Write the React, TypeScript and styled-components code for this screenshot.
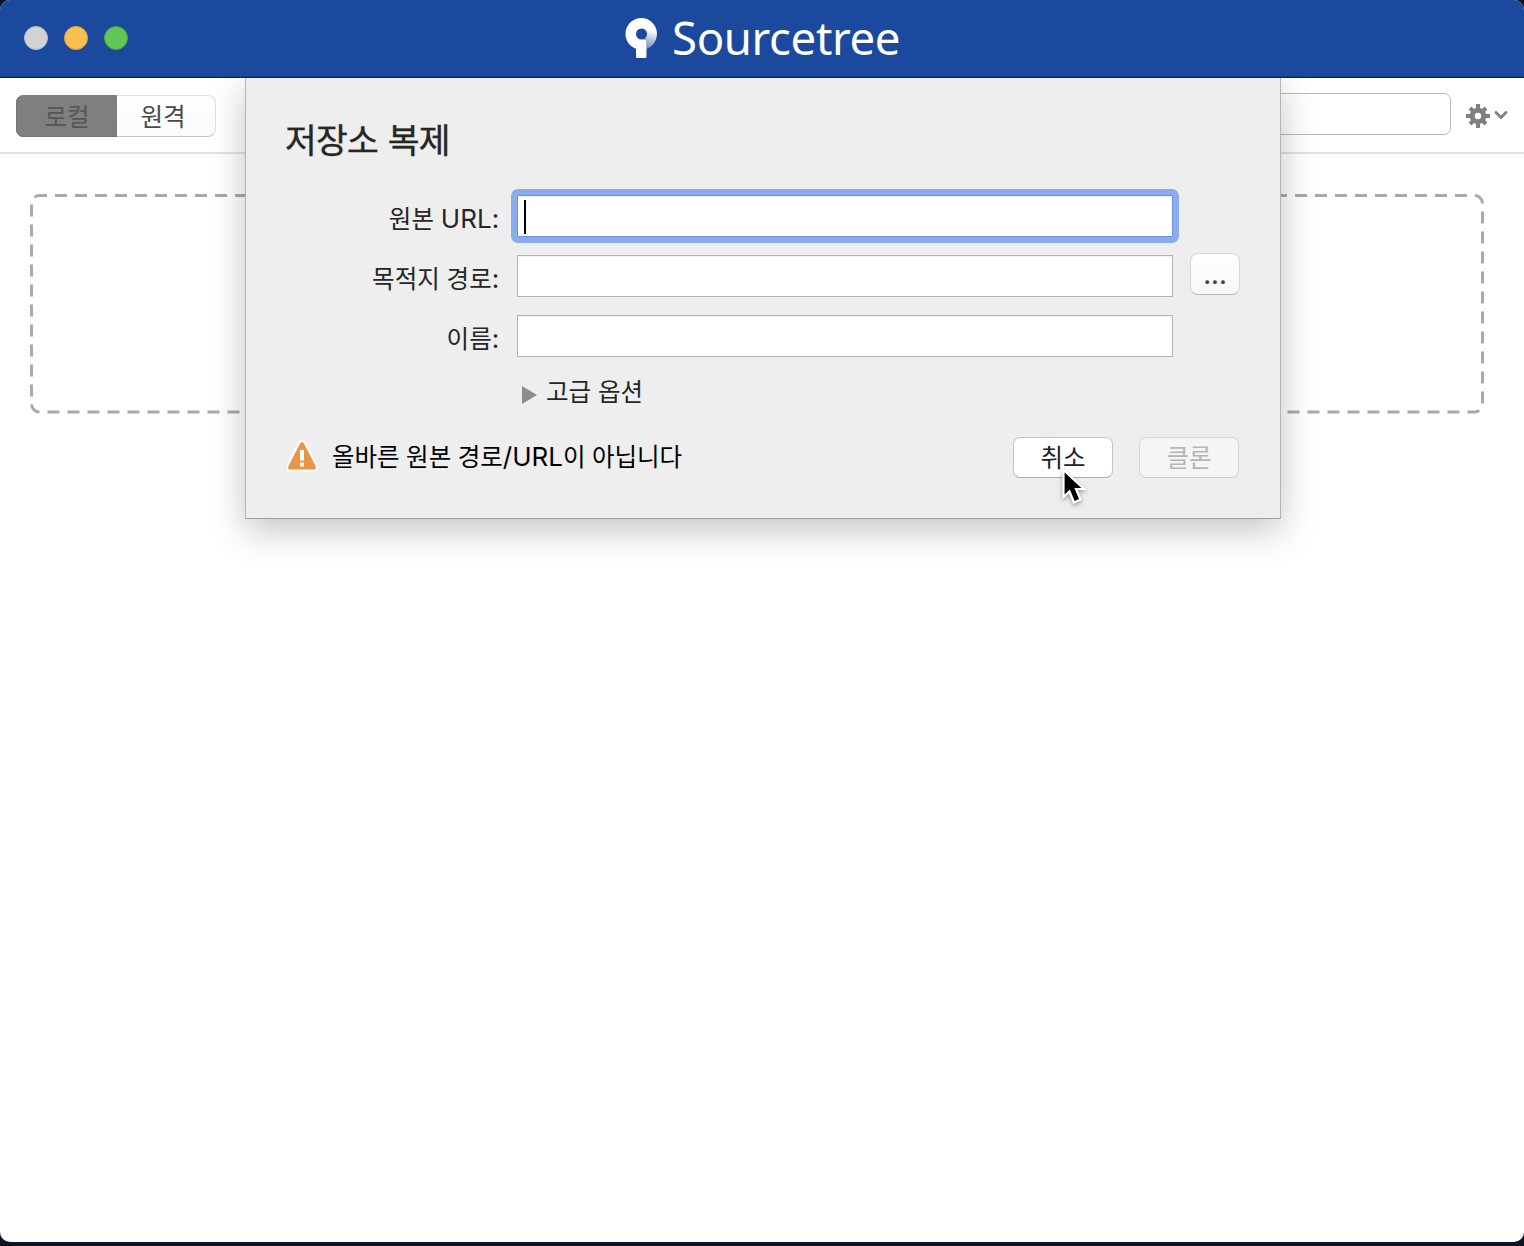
import React from "react";
import styled, { createGlobalStyle } from "styled-components";

const hangul = `"Noto Sans CJK KR", sans-serif`;

const GlobalStyle = createGlobalStyle`
  * { box-sizing: border-box; }
  body { margin: 0; background: #0d1424; font-family: ${hangul}; overflow: hidden; }
`;

const Desktop = styled.div`
  height: 1246px;
  background: #0d1424;
`;

const Window = styled.div`
  position: relative;
  display: flex;
  flex-direction: column;
  height: 1242px;
  border-radius: 10px;
  overflow: hidden;
  background: #fff;
`;

const TitleBar = styled.header`
  display: grid;
  grid-template-columns: 1fr auto 1fr;
  align-items: center;
  flex: none;
  height: 78px;
  padding: 0 24px 2px;
  background: #1b499e;
  box-shadow: inset 0 -1px #00206f, inset 0 -2px #113f93;
`;

const Lights = styled.div`
  display: flex;
  gap: 16px;
`;

const Light = styled.span<{ $fill: string; $edge: string }>`
  width: 24px;
  height: 24px;
  border-radius: 50%;
  border: 1px solid ${(p) => p.$edge};
  background: ${(p) => p.$fill};
`;

const Brand = styled.div`
  display: flex;
  align-items: center;
  width: 276px;
  height: 76px;
  gap: 14px;
  padding-left: 1px;
  svg { flex: none; }
`;

const BrandName = styled.span`
  margin-top: -2px;
  font: 400 45.5px/76px "Noto Sans", sans-serif;
  letter-spacing: -0.35px;
  color: #fff;
`;

const Toolbar = styled.div`
  display: flex;
  align-items: flex-start;
  flex: none;
  height: 76px;
  padding: 15px 16px 0;
  border-bottom: 2px solid #e2e2e2;
`;

const Segments = styled.div`
  display: flex;
  width: 200px;
  height: 42px;
  margin-top: 2px;
  border: 1px solid #e0e0e0;
  border-bottom-color: #c4c4c4;
  border-radius: 8px;
  background: linear-gradient(#fff, #fafafa);
`;

const Segment = styled.button<{ $active?: boolean }>`
  width: ${(p) => (p.$active ? 101 : 99)}px;
  height: 42px;
  margin: -1px;
  margin-right: 0;
  padding: ${(p) => (p.$active ? "0 0 0 1px" : "0 5px 0 0")};
  border: 0;
  border-radius: 8px 0 0 8px;
  background: ${(p) => (p.$active ? "#7f7f7f" : "transparent")};
  box-shadow: ${(p) => (p.$active ? "inset 0 -1px #727272, inset 1px 0 #747474" : "none")};
  color: ${(p) => (p.$active ? "#565656" : "#4a4a4a")};
  font: 400 24.5px/40px ${hangul};
`;

const SearchField = styled.input`
  width: 400px;
  height: 42px;
  margin-left: auto;
  border: 1px solid #b9b9b9;
  border-radius: 7px;
  background: #fff;
`;

const SettingsButton = styled.button`
  display: flex;
  align-items: center;
  gap: 4px;
  height: 46px;
  margin-left: 15px;
  padding: 0;
  border: 0;
  background: none;
`;

const Content = styled.main`
  padding: 40px 30px;
  svg { display: block; }
`;

const Sheet = styled.section`
  position: absolute;
  top: 78px;
  left: 245px;
  width: 1036px;
  height: 441px;
  padding: 36px 41px 0;
  background: #eee;
  border: 1px solid #b4b4b4;
  border-top: 0;
  border-bottom-color: #a0a0a0;
  box-shadow: 0 11px 34px rgba(0, 0, 0, 0.24);
  clip-path: inset(0 -80px -80px -80px);
`;

const SheetTitle = styled.h1`
  margin: 0 0 0 -2px;
  height: 48px;
  font: 400 34.5px/48px ${hangul};
  letter-spacing: -0.8px;
  word-spacing: 3px;
  color: #262626;
  -webkit-text-stroke: 0.4px #262626;
`;

const Form = styled.div`
  display: grid;
  grid-template-columns: 213px 656px 50px;
  grid-auto-rows: 42px;
  gap: 18px 17px;
  margin-top: 33px;
`;

const Label = styled.label`
  padding: 2px 0.6px 0 0;
  text-align: right;
  white-space: nowrap;
  font: 400 24.5px/42px ${hangul};
  letter-spacing: 0.1px;
  word-spacing: 1px;
  color: #262626;
`;

const Latin = styled.span`
  font-family: Inter, sans-serif;
  font-size: 26px;
  font-feature-settings: "calt" 0;
`;

const Field = styled.div<{ $focused?: boolean }>`
  display: flex;
  align-items: center;
  grid-column: 2;
  padding-left: 6px;
  border: 1px solid ${(p) => (p.$focused ? "#6b8fdb" : "#b3b3b3")};
  background: #fff;
  outline: ${(p) => (p.$focused ? "6px solid #8aabed" : "none")};
  border-radius: ${(p) => (p.$focused ? 1 : 0)}px;
  box-shadow: inset 0 1px #f0f0f0;
`;

const Caret = styled.span`
  width: 2px;
  height: 34px;
  margin-top: 2px;
  background: #000;
`;

const BrowseButton = styled.button`
  height: 42px;
  margin-top: -2px;
  padding: 1px 0 0;
  border: 1px solid #d6d6d6;
  border-bottom-color: #bcbcbc;
  border-radius: 8px;
  background: linear-gradient(#fff, #f7f7f7);
  color: #444;
  font: 500 26px/34px Inter, sans-serif;
  font-feature-settings: "calt" 0;
`;

const Disclosure = styled.div`
  display: flex;
  align-items: center;
  gap: 8px;
  height: 40px;
  margin: 15px 0 0 235px;
  font: 400 24.5px/40px ${hangul};
  word-spacing: 1.5px;
  color: #262626;
  svg { margin-top: 5px; }
`;

const DisclosureText = styled.span`
  margin-top: -2px;
`;

const Footer = styled.footer`
  display: flex;
  align-items: center;
  height: 42px;
  margin-top: 24px;
`;

const Warning = styled.p`
  flex: 1;
  margin: -2px 0 0 13px;
  font: 400 24.5px/42px ${hangul};
  word-spacing: 1px;
  color: #000;
  white-space: nowrap;
`;

const PushButton = styled.button<{ $disabled?: boolean }>`
  width: 100px;
  height: 41px;
  margin-left: 26px;
  padding: 0 0 1px;
  border: 1px solid ${(p) => (p.$disabled ? "#d6d6d6" : "#c6c6c6")};
  border-bottom-color: ${(p) => (p.$disabled ? "#cbcbcb" : "#acacac")};
  border-radius: 7px;
  background: ${(p) => (p.$disabled ? "#f5f5f5" : "#fff")};
  color: ${(p) => (p.$disabled ? "#b5b5b5" : "#222")};
  font: 400 24.5px/38px ${hangul};
`;

const Pointer = styled.svg`
  position: absolute;
  top: 466px;
  left: 1058px;
  filter: drop-shadow(0 2px 2px rgba(0, 0, 0, 0.35));
`;

const BrandMark = () => (
  <svg width="33" height="42" viewBox="0 0 33 42">
    <defs>
      <linearGradient id="fade" gradientUnits="userSpaceOnUse" x1="26" y1="13" x2="21" y2="32">
        <stop offset="0" stopColor="#fff" />
        <stop offset="1" stopColor="#fff" stopOpacity="0.35" />
      </linearGradient>
    </defs>
    <path
      fill="url(#fade)"
      d="M16.500 1A16 16 0 0 1 21.500 32V24Q21.500 22.500 19.500 21.600A5.500 5.500 0 0 0 16.500 11.500Z"
    />
    <path
      fill="#fff"
      d="M17 1H16.500C7.700 1 0.500 8 0.500 16.800C0.500 24 5 29.800 11 31.800V39.500Q11 41 12.500 41H20Q21.500 41 21.500 39.500V24.500Q21.500 22 18.500 22.200L16.500 22.500A5.500 5.500 0 0 1 16.500 11.500H17Z"
    />
  </svg>
);

const GearIcon = () => (
  <svg width="24" height="24" viewBox="-12 -12 24 24" fill="#808080">
    {[0, 45, 90, 135].map((a) => (
      <rect key={a} x="-2" y={a % 90 ? -11.3 : -12} width="4" height={a % 90 ? 22.6 : 24} transform={`rotate(${a})`} />
    ))}
    <circle r="8.300" />
    <circle r="3.200" fill="#fff" />
  </svg>
);

const ChevronIcon = () => (
  <svg width="14" height="10" viewBox="0 0 14 10">
    <path d="M2 1.500L7 6.500L12 1.500" fill="none" stroke="#808080" strokeWidth="2.900" strokeLinecap="round" />
  </svg>
);

const DropZone = () => (
  <svg width="1456" height="222" viewBox="30 194 1456 222">
    <path
      d="M39.500 195.500H1474.500A8 8 0 0 1 1482.500 203.500V404A8 8 0 0 1 1474.500 412H39.500A8 8 0 0 1 31.500 404V203.500A8 8 0 0 1 39.500 195.500"
      fill="none"
      stroke="#a9a9a9"
      strokeWidth="3"
      strokeDasharray="12 8"
      strokeDashoffset="-15.500"
    />
  </svg>
);

const WarningIcon = () => (
  <svg width="32" height="34" viewBox="0 0 32 34">
    <path
      d="M12 3.200Q15 -1 18 3.200L29 24.500Q31.500 30.500 27 30.500H3Q-1.500 30.500 1 24.500Z"
      fill="#e99648"
      stroke="#fff"
      strokeWidth="2"
    />
    <path d="M13 10H17V20.500H13ZM13 22.500H17V26.500H13Z" fill="#fff" />
  </svg>
);

export default function App() {
  return (
    <Desktop>
      <GlobalStyle />
      <Window>
        <TitleBar>
          <Lights>
            <Light $fill="#d2d2d2" $edge="#bcbcc0" />
            <Light $fill="#f7bf50" $edge="#e2a23c" />
            <Light $fill="#62c756" $edge="#44aa3d" />
          </Lights>
          <Brand>
            <BrandMark />
            <BrandName>Sourcetree</BrandName>
          </Brand>
        </TitleBar>
        <Toolbar>
          <Segments>
            <Segment $active>로컬</Segment>
            <Segment>원격</Segment>
          </Segments>
          <SearchField />
          <SettingsButton>
            <GearIcon />
            <ChevronIcon />
          </SettingsButton>
        </Toolbar>
        <Content>
          <DropZone />
        </Content>
        <Sheet>
          <SheetTitle>저장소 복제</SheetTitle>
          <Form>
            <Label>원본 <Latin>URL:</Latin></Label>
            <Field $focused><Caret /></Field>
            <span />
            <Label>목적지 경로<Latin>:</Latin></Label>
            <Field />
            <BrowseButton>...</BrowseButton>
            <Label>이름<Latin>:</Latin></Label>
            <Field />
          </Form>
          <Disclosure>
            <svg width="16" height="18" viewBox="0 0 16 18">
              <path d="M0 0L15 9L0 18Z" fill="#8c8c8c" />
            </svg>
            <DisclosureText>고급 옵션</DisclosureText>
          </Disclosure>
          <Footer>
            <WarningIcon />
            <Warning>올바른 원본 경로<Latin>/URL</Latin>이 아닙니다</Warning>
            <PushButton>취소</PushButton>
            <PushButton $disabled>클론</PushButton>
          </Footer>
        </Sheet>
        <Pointer width="32" height="44" viewBox="0 0 32 44">
          <path
            d="M5.500 4V31L11.500 25.500L16 36.500L22.500 33.500L18 23H26Z"
            fill="#000"
            stroke="#fff"
            strokeWidth="2.200"
          />
        </Pointer>
      </Window>
    </Desktop>
  );
}
